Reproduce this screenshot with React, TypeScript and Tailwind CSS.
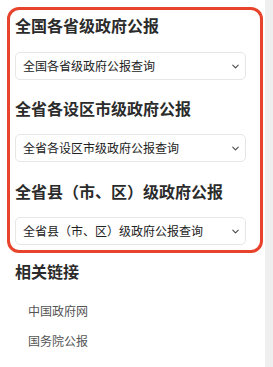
import { ChevronDown } from "lucide-react";

const sections = [
  { title: "全国各省级政府公报", option: "全国各省级政府公报查询", gap: "" },
  { title: "全省各设区市级政府公报", option: "全省各设区市级政府公报查询", gap: "mt-[18px]" },
  { title: "全省县（市、区）级政府公报", option: "全省县（市、区）级政府公报查询", gap: "mt-[19px]" },
];

const links = ["中国政府网", "国务院公报"];

function SelectBox({ label, first }: { label: string; first: boolean }) {
  return (
    <div
      className={`${first ? "mt-[17px]" : "mt-[16px]"} h-[28px] w-[231px] flex items-center justify-between rounded-[5px] border border-[#e6e6e6] bg-white pl-[7px] pr-[4px]`}
    >
      <span className="text-[12px] leading-none text-[#222]">{label}</span>
      <ChevronDown className="w-[11px] h-[11px] text-[#444]" strokeWidth={2.2} />
    </div>
  );
}

export default function App() {
  return (
    <div
      className="flex w-[273px] h-[367px] bg-white overflow-hidden"
      style={{ fontFamily: '"Noto Sans CJK SC", "Noto Sans", sans-serif' }}
    >
      <div className="w-[265px] pl-[7px] pt-[7px]">
        {/* Highlighted bulletin panel */}
        <div className="w-[256px] h-[246px] rounded-[12px] border-[3px] border-[#e8432c] pl-[5px] pt-[5px]">
          {sections.map((s, i) => (
            <div key={s.title} className={s.gap}>
              <h2 className="text-[16px] leading-[20px] font-bold text-[#2b2b2b]">{s.title}</h2>
              <SelectBox label={s.option} first={i === 0} />
            </div>
          ))}
        </div>

        {/* Related links */}
        <div className="pl-[8px] pt-[8px]">
          <h2 className="text-[16px] leading-[20px] font-bold text-[#2b2b2b]">相关链接</h2>
          <ul className="mt-[21px] pl-[13px] flex flex-col gap-[12px]">
            {links.map((l) => (
              <li key={l} className="text-[12px] leading-[18px] text-[#555]">
                {l}
              </li>
            ))}
          </ul>
        </div>
      </div>
      <div className="flex-1 bg-[#efefef]" />
    </div>
  );
}
